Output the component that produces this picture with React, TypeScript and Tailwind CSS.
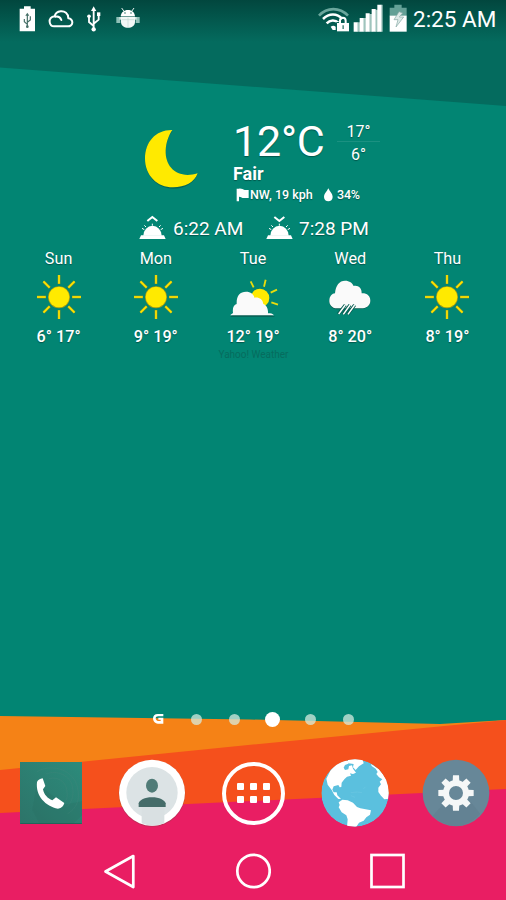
import React from "react";

const SHADOW = "[text-shadow:0_1px_1px_rgba(0,0,0,0.35)]";

function Wallpaper() {
  return (
    <svg className="absolute inset-0" width="506" height="900" viewBox="0 0 506 900">
      <defs>
        <linearGradient id="shade" x1="0" y1="0" x2="0" y2="1">
          <stop offset="0" stopColor="#00332d" stopOpacity="0.65" />
          <stop offset="1" stopColor="#00332d" stopOpacity="0" />
        </linearGradient>
      </defs>
      <rect width="506" height="900" fill="#028573" />
      <path d="M0 0H506V106L0 67.500Z" fill="#046b5e" />
      <rect width="506" height="42" fill="url(#shade)" />
      <path d="M0 716L250 719.500L440 724L506 720V900H0Z" fill="#f58216" />
      <path d="M0 770L253 744.500L506 720V900H0Z" fill="#f5501c" />
      <path d="M0 813L506 789V900H0Z" fill="#e91e63" />
    </svg>
  );
}

function BatteryUsb() {
  return (
    <svg width="17" height="26" viewBox="57 15 51 78">
      <path d="M72 16h20v7h13v68H59V23h13z" fill="#fff" />
      <g fill="none" stroke="#456e66" strokeWidth="3.500">
        <path d="M82 40v37M82 70l-9-8v-8M82 64l9-7v-11" />
      </g>
      <circle cx="82" cy="77" r="4" fill="#456e66" />
      <path d="M76 44l6-9 6 9z" fill="#456e66" />
    </svg>
  );
}

function CloudIcon() {
  return (
    <svg width="26" height="18" viewBox="144 28 78 54" fill="none" stroke="#fff" strokeWidth="6" strokeLinecap="round" strokeLinejoin="round">
      <path d="M162 77h41a13 12 0 0 0 2-24C205 38 194 31 182 32c-10 1-16 6-18 15-11 1-16 8-15 17 1 8 6 13 13 13z" />
      <path d="M166 48c8-2 15 2 18 10" />
    </svg>
  );
}

function UsbIcon() {
  return (
    <svg width="16" height="26" viewBox="260 15 48 78" fill="none" stroke="#fff" strokeWidth="5.500">
      <path d="M283 24v60M283 75l-14-12V47M283 68l15-12V42" />
      <path d="M275 30l8-14 8 14z" fill="#fff" stroke="none" />
      <circle cx="283" cy="85" r="6.500" fill="#fff" stroke="none" />
      <circle cx="269" cy="46" r="5.500" fill="#fff" stroke="none" />
      <path d="M293 34h10v11h-10z" fill="#fff" stroke="none" />
    </svg>
  );
}

function BugDroid() {
  return (
    <svg width="24" height="22" viewBox="349 20 72 66">
      <path d="M366 23l7 10M403 23l-7 10" stroke="#e8f1ef" strokeWidth="3" />
      <path d="M363 48c1-12 10-19 22-19s20 7 21 19z" fill="#fff" />
      <circle cx="376" cy="38" r="2.500" fill="#31776d" />
      <circle cx="394" cy="38" r="2.500" fill="#31776d" />
      <path d="M350 50h12v18h-12zM408 50h12v18h-12z" fill="#8fc0b7" />
      <path d="M359 50h52v8h-52z" fill="#d4e5e1" />
      <path d="M364 49h42v15c0 12-10 18-21 18s-21-6-21-18z" fill="#f2f8f6" />
      <path d="M385 52v28M366 58h38" stroke="#c3d8d3" strokeWidth="2" />
    </svg>
  );
}

function WifiLock() {
  return (
    <svg width="33" height="26" viewBox="190 18 99 78" fill="none">
      <path d="M196 47C220 21 258 21 283 47" stroke="#6ba69c" strokeWidth="8" />
      <path d="M208 57c18-18 42-18 58 0" stroke="#fff" strokeWidth="7.500" />
      <path d="M219 70c10-11 26-11 35-2" stroke="#fff" strokeWidth="7.500" />
      <path d="M231 80q8-6 15 0v10h-9z" fill="#fff" />
      <path d="M248 66h40v29h-40z" fill="#056357" />
      <path d="M259 69v-7c0-12 17-12 17 0v7" stroke="#fff" strokeWidth="6" />
      <path d="M250 69h36v25h-36z" fill="#fff" />
      <path d="M266 76h5v11h-5z" fill="#5d968c" />
    </svg>
  );
}

function SignalBars() {
  return (
    <svg width="30" height="28" viewBox="298 12 90 84">
      <path d="M311 67h8v28h-8zM329 54h9v41h-9zM347 42h9v53h-9zM365 29h9v66h-9zM381 14h6v81h-6z" fill="#9fc4bd" />
      <path d="M300 67h12v28h-12zM318 54h12v41h-12zM336 40h12v55h-12zM354 27h12v68h-12zM371 14h12v81h-12z" fill="#fff" />
    </svg>
  );
}

function ChargingBattery() {
  return (
    <svg width="18" height="28" viewBox="407 12 54 84">
      <path d="M423 14h22v9h15v26h-51V23h14z" fill="#63a096" />
      <path d="M409 47h51v48h-51z" fill="#fff" />
      <path d="M437 35l-15 24h12l-6 22 23-30h-13l10-12z" fill="#dce9e7" stroke="#87a9a4" strokeWidth="2" />
    </svg>
  );
}

function StatusBar() {
  return (
    <header className="flex h-[38px] shrink-0 items-center pl-[19px] text-white">
      <BatteryUsb />
      <span className="ml-3"><CloudIcon /></span>
      <span className="ml-[12px]"><UsbIcon /></span>
      <span className="-mt-[2px] ml-[14px]"><BugDroid /></span>
      <div className="ml-[177px] flex items-center">
        <span className="-mt-px"><WifiLock /></span>
        <span className="-mt-[2px] ml-[3px]"><SignalBars /></span>
        <span className="-mt-[2px] ml-[6px]"><ChargingBattery /></span>
        <span className="ml-[6px] text-[22.500px] leading-[38px] whitespace-nowrap">2:25 AM</span>
      </div>
    </header>
  );
}

function Moon() {
  return (
    <svg width="54" height="62" viewBox="43 58 162 186">
      <path d="M128 64C78 60 46 97 46 149c0 50 37 88 84 88 36 0 64-17 74-45-59 18-98-17-96-70 1-24 9-43 20-58z" fill="#04574c" opacity="0.7" />
      <path d="M128 61C78 60 46 97 46 147c0 50 37 86 84 86 36 0 64-14 74-42-59 18-98-17-96-69 1-24 9-45 20-61z" fill="#ffea00" />
    </svg>
  );
}

function Flag() {
  return (
    <svg width="13" height="14" viewBox="316 232 39 42">
      <path d="M318 234h7c9-1 11 3 17 4h12v24h-15c-5 0-7-4-14-4v14h-7z" fill="#fff" />
    </svg>
  );
}

function Drop() {
  return (
    <svg width="10" height="14" viewBox="580 231 30 42">
      <path d="M596 232c4 9 13 16 13 26 0 8-6 13-13 13s-13-5-13-13c0-10 9-17 13-26z" fill="#fff" />
    </svg>
  );
}

function Horizon({ rising }: { rising: boolean }) {
  return (
    <svg width="27" height="25" viewBox="28 312 81 75">
      <path d={rising ? "M53 330l15-12 15 12" : "M53 318l15 12 15-12"} fill="none" stroke="#fff" strokeWidth="6" />
      <path d="M37 352l7 4M44 343l5 5M93 343l-5 5M100 352l-7 4M68 338v6" stroke="#fff" strokeWidth="3" />
      <path d="M41 374a27 29 0 0 1 55 0z" fill="#fff" />
      <path d="M34 373h69l5 11H29z" fill="#fff" />
    </svg>
  );
}

function SunIcon() {
  return (
    <svg width="46" height="46" viewBox="-69 -69 138 138">
      {[0, 45, 90, 135, 180, 225, 270, 315].map((a) => (
        <g key={a} transform={`rotate(${a})`}>
          <rect x="-4" y="-66" width="8" height="27" fill="#9c9a1b" />
          <rect x="-2.500" y="-66" width="5" height="26" fill="#ffe500" />
        </g>
      ))}
      <circle r="33" cy="1" fill="#a79d16" />
      <circle r="31" fill="#ffea00" />
    </svg>
  );
}

function PartlyCloudy() {
  return (
    <svg className="mt-[1px] ml-[3px]" width="52" height="42" viewBox="86 93 156 126">
      <g stroke="#e9dc0c" strokeWidth="5.500">
        <path d="M151 106l9 18M196 101l-5 21M230 131l-19 9M233 176l-20-7" />
      </g>
      <circle cx="179" cy="156" r="28" fill="#ffea00" />
      <path d="M90 212h134l-16-7H98z" fill="#075b50" />
      <path d="M90 208c2-4 6-4 8-7-2-16 2-24 11-27-1-26 10-37 28-37 14 0 24 8 25 18 14-2 25 4 27 19 11 4 15 17 14 28 8 0 14 1 18 6z" fill="#fafafa" />
    </svg>
  );
}

function RainCloud() {
  return (
    <svg className="mt-[2px]" width="44" height="38" viewBox="386 106 132 114">
      <path d="M413 197c-16 0-24-12-23-27 1-12 8-19 17-20 2-24 13-38 30-38 14 0 22 7 26 16 14-3 25 7 24 22 15-1 26 7 26 23 0 15-12 23-29 23z" fill="#07594e" />
      <path d="M413 194c-16 0-24-12-23-25 1-12 8-19 17-20 2-24 13-38 30-38 14 0 22 7 26 16 14-3 25 7 24 22 15-1 26 7 26 22s-12 23-29 23z" fill="#fafafa" />
      <path d="M417 211l21-27M431 212l21-28M445 212l21-28" stroke="#075e52" strokeWidth="10" />
      <path d="M418 211l20-27M432 212l20-28M446 212l20-28" stroke="#fff" strokeWidth="4.500" />
    </svg>
  );
}

const forecast = [
  { day: "Sun", temp: "6° 17°", Icon: SunIcon },
  { day: "Mon", temp: "9° 19°", Icon: SunIcon },
  { day: "Tue", temp: "12° 19°", Icon: PartlyCloudy },
  { day: "Wed", temp: "8° 20°", Icon: RainCloud },
  { day: "Thu", temp: "8° 19°", Icon: SunIcon },
];

function WeatherWidget() {
  return (
    <section className={`mt-[81px] flex flex-col whitespace-nowrap text-white ${SHADOW}`}>
      <div className="flex h-[88px] pl-[144px]">
        <div className="w-[90px] pt-[10px]"><Moon /></div>
        <div>
          <div className="flex h-[46px]">
            <div className="-ml-px w-[104px] text-[43px] leading-[45px] -tracking-[0.200px]">12°C</div>
            <div className="flex w-[43px] flex-col text-center text-[16px]">
              <span className="h-[23px] border-b border-white/10 leading-[25px]">17°</span>
              <span className="leading-[25px]">6°</span>
            </div>
          </div>
          <div className="-ml-px text-[18px] leading-[18px] font-bold">Fair</div>
          <div className="flex h-6 items-center text-[12.500px] leading-6 font-medium">
            <span className="ml-[2px]"><Flag /></span>
            <span className="ml-[1px] w-[73px]">NW, 19 kph</span>
            <Drop />
            <span className="ml-[4px] tracking-[-0.200px]">34%</span>
          </div>
        </div>
      </div>
      <div className="flex h-11 items-center pl-[139px] text-[19px] leading-[44px]">
        <span className="-mt-[3px]"><Horizon rising /></span>
        <span className="ml-[7px] w-[93px]">6:22 AM</span>
        <span className="-mt-[3px]"><Horizon rising={false} /></span>
        <span className="ml-[6px]">7:28 PM</span>
      </div>
      <div className="flex px-[10px] text-[16.200px]">
        {forecast.map(({ day, temp, Icon }) => (
          <div key={day} className="flex flex-1 flex-col items-center">
            <span className="leading-[15px]">{day}</span>
            <span className="flex h-[62px] items-center"><Icon /></span>
            <span className="leading-[17px] font-medium">{temp}</span>
          </div>
        ))}
      </div>
      <div className="pl-px text-center text-[10px] leading-[20px] text-[#066c5e] [text-shadow:none]">Yahoo! Weather</div>
    </section>
  );
}

function PageDots() {
  return (
    <div className="mt-auto flex h-[22px] items-center pl-[139px]">
      <span className="flex w-[38px] justify-center">
        <svg width="12" height="12" viewBox="457 40 36 36">
          <path d="M491 43h-17c-9 0-14 6-14 13s5 16 15 16h16V54h-15v6h7v4h-7c-5 0-8-4-8-8s3-6 8-6h15z" fill="#fff" />
        </svg>
      </span>
      {[false, false, true, false, false].map((active, i) => (
        <span key={i} className="flex w-[38px] justify-center">
          <span className={active ? "h-[15px] w-[15px] rounded-full bg-white" : "h-[11px] w-[11px] rounded-full bg-[#d5ebdf]/75"} />
        </span>
      ))}
    </div>
  );
}

function PhoneApp() {
  return (
    <svg className="-ml-[2px]" width="62" height="62" viewBox="60 186 186 186">
      <defs>
        <linearGradient id="phone" x1="0" y1="1" x2="1" y2="0">
          <stop offset="0" stopColor="#2d7469" />
          <stop offset="1" stopColor="#2c8b7b" />
        </linearGradient>
      </defs>
      <rect x="60" y="186" width="186" height="186" fill="url(#phone)" />
      <path d="M111 250l-14 80 22 42h100l27-26v-42l-53 10z" fill="#286b60" opacity="0.25" />
      <g fill="none" stroke="#45877c" strokeWidth="2" opacity="0.45">
        <path d="M110 216c40-26 105-10 120 38s-4 73-27 87M137 222c36-13 74 5 80 37s-3 48-16 61M146 236c27-7 50 8 54 32s0 31-7 39" />
      </g>
      <path d="M61 371.500h184" stroke="#1e5c53" strokeWidth="3" />
      <path d="M111 246c3-6 9-10 17-11l8 23-7 10c3 16 14 28 28 33l11-9 25 17c-2 9-8 15-19 17-37-7-68-38-63-80z" fill="#fff" />
    </svg>
  );
}

function ContactsApp() {
  return (
    <svg className="-ml-px" width="68" height="68" viewBox="355 178 204 204">
      <circle cx="457" cy="281" r="100" fill="#78413e" opacity="0.35" />
      <circle cx="457" cy="279" r="99" fill="#fff" />
      <circle cx="457" cy="279" r="77" fill="#dce3e5" />
      <path d="M426 322h68v49q-36 14-68 0z" fill="#d9e0e2" />
      <ellipse cx="457" cy="258" rx="18" ry="21" fill="#507b77" />
      <path d="M417 322v-11c2-10 18-18 40-18s38 8 41 18v11z" fill="#456c69" />
    </svg>
  );
}

function AppDrawer() {
  return (
    <span className="flex h-[63px] w-[63px] items-center justify-center rounded-full border-[4px] border-white">
      <span className="grid grid-cols-3 gap-[6px]">
        {[0, 1, 2, 3, 4, 5].map((i) => (
          <span key={i} className="h-[7px] w-[7px] rounded-[1px] bg-white" />
        ))}
      </span>
    </span>
  );
}

function BrowserApp() {
  return (
    <svg width="68" height="68" viewBox="8 9 204 204">
      <defs>
        <clipPath id="globe"><circle cx="110" cy="111" r="101" /></clipPath>
      </defs>
      <g clipPath="url(#globe)">
        <circle cx="110" cy="111" r="101" fill="#5bc0de" />
        <path d="M28 86L24 68L36 44L54 24L78 12L92 16L90 23L80 27L76 35L80 42L90 40L92 30L101 28L104 38L113 50L104 54L95 52L98 59L86 62L78 70L70 80L69 93L64 94L60 87L46 91L42 101L46 109L55 109L57 118L68 129L60 129L48 117L40 102Z" fill="#fff" />
        <path d="M88 8H132L136 22L122 31L112 42L104 34L106 24L90 22Z" fill="#fff" />
        <path d="M61 139L72 131L88 133L104 140L116 153L126 157L158 163L155 176L144 184L136 194L122 200L114 212H86L88 190L84 178L70 169L61 154L64 147Z" fill="#fff" />
        <path d="M158 24L182 40L196 58L212 82V128L198 130L188 119L180 108V95L188 85L184 77L192 70L182 64L174 54L178 48L172 38L160 30Z" fill="#fff" />
        <path d="M97 110l20-2 14 2M110 124l-12-5M135 99l7-7" stroke="#70c8e3" strokeWidth="1.500" fill="none" />
      </g>
    </svg>
  );
}

function SettingsApp() {
  return (
    <svg width="68" height="68" viewBox="508 178 204 204">
      <circle cx="610" cy="280" r="100" fill="#678798" />
      <path d="M570 315l-31 34q32 28 71 31 40-2 73-37l-28-36z" fill="#5c7989" opacity="0.35" />
      <g fill="#f5f7f7">
        {[0, 45, 90, 135, 180, 225, 270, 315].map((a) => (
          <path key={a} d="M600 245l1-18h18l1 18z" transform={`rotate(${a} 610 280)`} />
        ))}
      </g>
      <circle cx="610" cy="280" r="30" fill="none" stroke="#f5f7f7" strokeWidth="18" />
    </svg>
  );
}

function Dock() {
  return (
    <div className="mt-[29px] flex h-[68px] pl-[1px]">
      {[PhoneApp, ContactsApp, AppDrawer, BrowserApp, SettingsApp].map((Icon, i) => (
        <span key={i} className="flex flex-1 items-center justify-center"><Icon /></span>
      ))}
    </div>
  );
}

function NavBar() {
  return (
    <nav className="mt-[26px] flex h-[47px] items-start justify-center gap-[98px]">
      <svg width="36" height="36" viewBox="0 0 36 36" fill="none">
        <path d="M32.300 3L4.500 18.500L32.300 34Z" stroke="#fff" strokeWidth="2.700" strokeLinejoin="round" />
      </svg>
      <svg width="36" height="36" viewBox="0 0 36 36" fill="none">
        <circle cx="18.500" cy="18" r="16.200" stroke="#fff" strokeWidth="2.700" />
      </svg>
      <svg width="36" height="36" viewBox="0 0 36 36" fill="none">
        <rect x="2.500" y="2" width="32" height="32" stroke="#fff" strokeWidth="2.700" />
      </svg>
    </nav>
  );
}

export default function App() {
  return (
    <div className="relative h-[900px] w-[506px] overflow-hidden font-['Roboto',sans-serif]">
      <Wallpaper />
      <main className="relative flex h-full flex-col">
        <StatusBar />
        <WeatherWidget />
        <PageDots />
        <Dock />
        <NavBar />
      </main>
    </div>
  );
}
